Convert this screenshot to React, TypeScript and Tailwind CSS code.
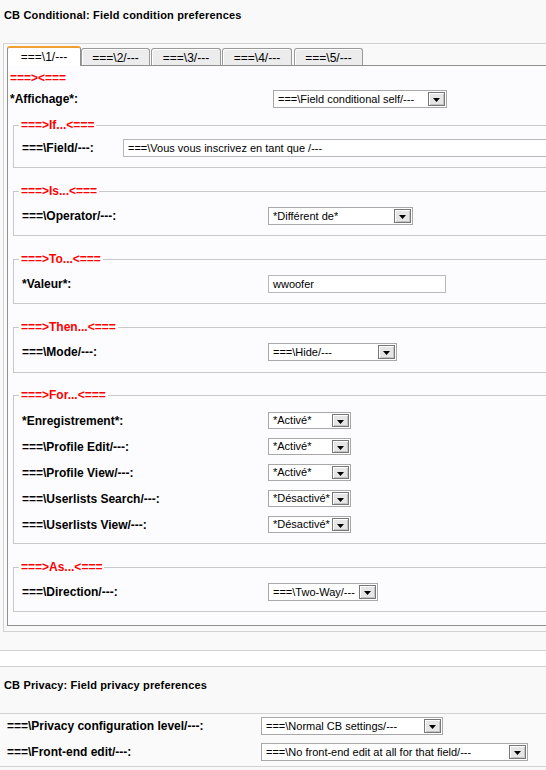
import React from "react";

function Arrow() {
  return (
    <span className="flex h-full w-[17px] shrink-0 items-center justify-center border border-[#777777] bg-[#e6e6e6] shadow-[inset_1px_1px_0_#ffffff,inset_-1px_-1px_0_#c4c4c4]">
      <svg width="7" height="4" viewBox="0 0 7 4" className="mt-[2px]">
        <path d="M0 0H7L3.5 4Z" fill="#000000" />
      </svg>
    </span>
  );
}

function Select({ text, className }: { text: string; className: string }) {
  return (
    <div
      className={
        "flex shrink-0 items-stretch justify-between border border-[#a8a8a8] bg-white p-[1px] pl-[4px] " +
        className
      }
    >
      <span className="flex items-center overflow-hidden whitespace-nowrap text-[11px] leading-none text-black">
        {text}
      </span>
      <Arrow />
    </div>
  );
}

function Input({ text, className }: { text: string; className: string }) {
  return (
    <div
      className={
        "flex shrink-0 items-center border border-[#b8b8b8] bg-white pl-[4px] text-[11px] leading-none text-black whitespace-nowrap " +
        className
      }
    >
      {text}
    </div>
  );
}

function Label({ text, className }: { text: string; className: string }) {
  return (
    <div className={"shrink-0 whitespace-nowrap text-[12px] font-bold leading-none text-black " + className}>
      {text}
    </div>
  );
}

function Fieldset({
  legend,
  className,
  children,
}: {
  legend: string;
  className: string;
  children: React.ReactNode;
}) {
  return (
    <fieldset className={"ml-[5px] w-[560px] border border-[#c8c8c8] pl-[5px] " + className}>
      <legend className="px-[2px] text-[12px] font-bold leading-[14px] text-[#ff0000]">{legend}</legend>
      {children}
    </fieldset>
  );
}

function Row({ children, className = "" }: { children: React.ReactNode; className?: string }) {
  return <div className={"flex items-center " + className}>{children}</div>;
}

const forRows: [string, string][] = [
  ["*Enregistrement*:", "*Activé*"],
  ["===\\Profile Edit/---:", "*Activé*"],
  ["===\\Profile View/---:", "*Activé*"],
  ["===\\Userlists Search/---:", "*Désactivé*"],
  ["===\\Userlists View/---:", "*Désactivé*"],
];

export default function App() {
  return (
    <div className="h-[770px] w-[546px] overflow-hidden bg-[#f9f9f9] font-['Liberation_Sans',Arial,sans-serif] text-black">
      <div className="h-[43px] pl-[4px] pt-[9px] text-[11px] font-bold leading-[13px] tracking-[0.18px]">
        CB Conditional: Field condition preferences
      </div>

      <div className="ml-[3px] w-[570px] border border-[#d2d2d2] pb-[5px] pl-[3px] pt-[2px]">
        <div className="flex h-[19px] items-end">
          <div className="relative z-10 -mb-[1px] flex h-[20px] w-[74px] items-center justify-center rounded-t-[3px] border-x border-t-2 border-x-[#8f8f8f] border-t-[#f0a030] bg-white text-[12px] leading-none">
            ===\1/---
          </div>
          <div className="flex h-[17px] w-[69px] items-center justify-center rounded-t-[3px] border border-b-0 border-[#9a9a9a] bg-[#ececec] pt-[1px] text-[12px] leading-none shadow-[inset_1px_1px_0_#ffffff]">
            ===\2/---
          </div>
          <div className="ml-[1px] flex h-[17px] w-[70px] items-center justify-center rounded-t-[3px] border border-b-0 border-[#9a9a9a] bg-[#ececec] pt-[1px] text-[12px] leading-none shadow-[inset_1px_1px_0_#ffffff]">
            ===\3/---
          </div>
          <div className="ml-[1px] flex h-[17px] w-[70px] items-center justify-center rounded-t-[3px] border border-b-0 border-[#9a9a9a] bg-[#ececec] pt-[1px] text-[12px] leading-none shadow-[inset_1px_1px_0_#ffffff]">
            ===\4/---
          </div>
          <div className="ml-[2px] flex h-[17px] w-[69px] items-center justify-center rounded-t-[3px] border border-b-0 border-[#9a9a9a] bg-[#ececec] pt-[1px] text-[12px] leading-none shadow-[inset_1px_1px_0_#ffffff]">
            ===\5/---
          </div>
        </div>

        <div className="w-[566px] border border-[#8f8f8f] bg-[#fcfcfe] pb-[13px]">
          <div className="pl-[2px] pt-[5px] text-[12px] font-bold leading-[14px] text-[#ff0000]">===&gt;&lt;===</div>

          <Row className="mt-[5px] h-[18px]">
            <Label text="*Affichage*:" className="w-[265px] pl-[2px]" />
            <Select text="===\Field conditional self/---" className="h-[18px] w-[174px]" />
          </Row>

          <Fieldset legend="===>If...<===" className="mt-[10px] pb-[10px] pt-[7px]">
            <Row className="h-[18px]">
              <Label text="===\Field/---:" className="w-[104px] pl-[3px]" />
              <Input text="===\Vous vous inscrivez en tant que /---" className="h-[18px] w-[440px]" />
            </Row>
          </Fieldset>

          <Fieldset legend="===>Is...<===" className="mt-[16px] pb-[10px] pt-[9px]">
            <Row className="h-[18px]">
              <Label text="===\Operator/---:" className="w-[249px] pl-[3px]" />
              <Select text="*Différent de*" className="h-[18px] w-[145px]" />
            </Row>
          </Fieldset>

          <Fieldset legend="===>To...<===" className="mt-[16px] pb-[10px] pt-[9px]">
            <Row className="h-[18px]">
              <Label text="*Valeur*:" className="w-[249px] pl-[3px]" />
              <Input text="wwoofer" className="h-[18px] w-[178px]" />
            </Row>
          </Fieldset>

          <Fieldset legend="===>Then...<===" className="mt-[16px] pb-[11px] pt-[9px]">
            <Row className="h-[18px]">
              <Label text="===\Mode/---:" className="w-[249px] pl-[3px]" />
              <Select text="===\Hide/---" className="h-[18px] w-[129px]" />
            </Row>
          </Fieldset>

          <Fieldset legend="===>For...<===" className="mt-[15px] pb-[10px] pt-[10px]">
            <div className="flex flex-col gap-[9px]">
              {forRows.map(([l, v]) => (
                <Row key={l} className="h-[17px]">
                  <Label text={l} className="w-[249px] pl-[3px]" />
                  <Select text={v} className="h-[17px] w-[83px]" />
                </Row>
              ))}
            </div>
          </Fieldset>

          <Fieldset legend="===>As...<===" className="mt-[16px] pb-[10px] pt-[9px]">
            <Row className="h-[18px]">
              <Label text="===\Direction/---:" className="w-[249px] pl-[3px]" />
              <Select text="===\Two-Way/---" className="h-[18px] w-[110px]" />
            </Row>
          </Fieldset>
        </div>
      </div>

      <div className="mt-[18px] h-[17px] border-y border-[#d2d2d2] bg-white" />

      <div className="h-[46px] pl-[4px] pt-[12px] text-[11px] font-bold leading-[13px] tracking-[0.15px]">
        CB Privacy: Field privacy preferences
      </div>

      <div className="flex flex-col gap-[8px] border-y border-[#d2d2d2] bg-[#fafafa] pb-[5px] pt-[3px]">
        <Row className="h-[18px]">
          <Label text="===\Privacy configuration level/---:" className="w-[261px] pl-[7px]" />
          <Select text="===\Normal CB settings/---" className="h-[18px] w-[182px]" />
        </Row>
        <Row className="h-[18px]">
          <Label text="===\Front-end edit/---:" className="w-[261px] pl-[7px]" />
          <Select text="===\No front-end edit at all for that field/---" className="h-[18px] w-[267px]" />
        </Row>
      </div>
    </div>
  );
}
